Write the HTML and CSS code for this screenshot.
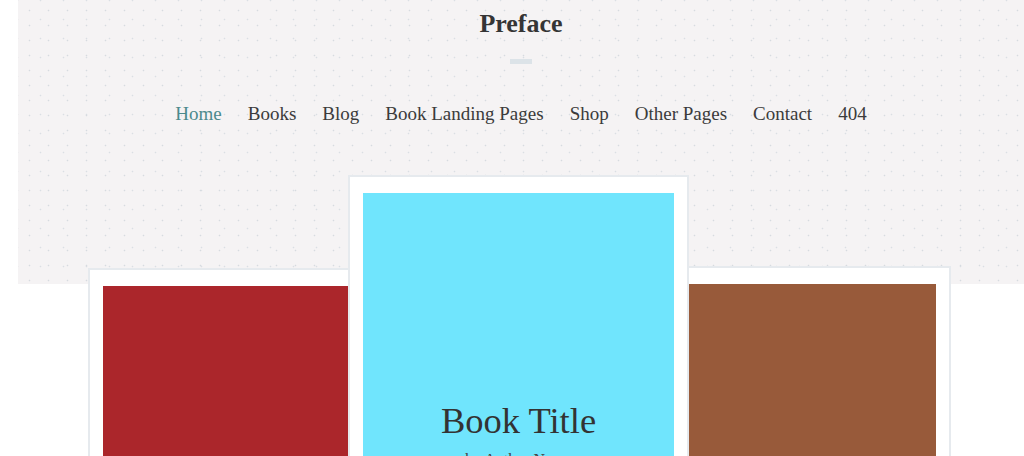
FILE: index.html
```html
<!DOCTYPE html>
<html lang="en">
<head>
    <meta charset="UTF-8">
    <meta name="viewport" content="width=device-width, initial-scale=1.0">
    <title>Preface</title>
    <link rel="stylesheet" href="styles.css">
</head>
<body>
    <header class="hero">
        <h1 class="site-title">Preface</h1>
        <div class="divider"></div>
        <nav class="menu">
            <a href="#" class="current">Home</a>
            <a href="#">Books</a>
            <a href="#">Blog</a>
            <a href="#">Book Landing Pages</a>
            <a href="#">Shop</a>
            <a href="#">Other Pages</a>
            <a href="#">Contact</a>
            <a href="#">404</a>
        </nav>
    </header>

    <section class="shelf">
        <div class="book book-left">
            <div class="cover cover-red"></div>
        </div>
        <div class="book book-main">
            <div class="cover cover-cyan">
                <h2 class="book-title">Book Title</h2>
                <p class="book-author">by Author Name</p>
            </div>
        </div>
        <div class="book book-right">
            <div class="cover cover-brown"></div>
        </div>
    </section>
</body>
</html>
```

FILE: styles.css
```css
body {
    margin: 0;
    font-family: 'Liberation Serif', 'Times New Roman', serif;
    color: #3b3b3b;
    background: #fff;
    overflow: hidden;
}
.hero {
    margin-left: 18px;
    height: 284px;
    padding-top: 9px;
    box-sizing: border-box;
    text-align: center;
    background-color: #f5f3f4;
    background-image:
        radial-gradient(circle, #d6dbe0 0.7px, transparent 1.1px),
        radial-gradient(circle, #dadfe4 0.7px, transparent 1.1px);
    background-size: 19px 15px, 23px 19px;
    background-position: 2px 3px, 11px 10px;
}
.site-title {
    margin: 0;
    font-size: 26px;
    line-height: 30px;
    font-weight: bold;
    color: #353535;
}
.divider {
    width: 22px;
    height: 5px;
    margin: 20px auto 0;
    background: #dce3e8;
}
.menu {
    display: flex;
    justify-content: center;
    gap: 26px;
    margin-top: 38px;
    font-size: 19px;
    line-height: 24px;
}
.menu a {
    color: #3b3b3b;
    text-decoration: none;
}
.menu a.current {
    color: #4c8a8c;
}
.shelf {
    display: flex;
    justify-content: center;
    align-items: flex-start;
    margin: -109px 0 0 18px;
    padding-right: 3px;
}
.book {
    background: #fff;
    border: 2px solid #e6eaee;
    padding: 16px 13px 0;
    box-sizing: border-box;
}
.book-left {
    width: 320px;
    margin-top: 93px;
    margin-right: -60px;
}
.book-right {
    width: 320px;
    margin-top: 91px;
    margin-left: -58px;
}
.book-main {
    position: relative;
    z-index: 1;
    width: 341px;
}
.cover {
    height: 420px;
}
.cover-red {
    background: #ab262b;
}
.cover-brown {
    background: #985a3a;
}
.cover-cyan {
    background: #70e5fd;
    padding-top: 208px;
    box-sizing: border-box;
    height: 480px;
    text-align: center;
}
.book-title {
    margin: 0;
    font-size: 36.5px;
    line-height: 40px;
    font-weight: normal;
    color: #333;
}
.book-author {
    margin: 8px 0 0;
    font-size: 16px;
    line-height: 22px;
    color: #444;
}
```
